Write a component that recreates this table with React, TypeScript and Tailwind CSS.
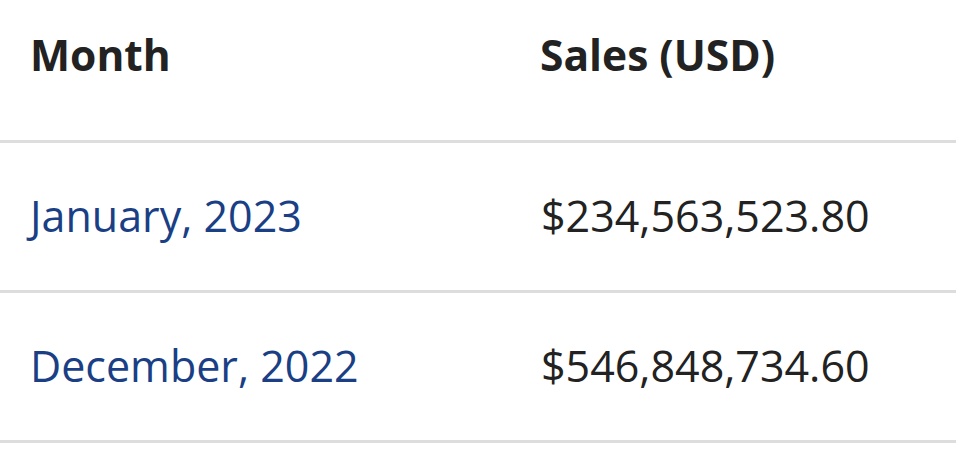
const rows = [
  { month: "January, 2023", sales: "$234,563,523.80" },
  { month: "December, 2022", sales: "$546,848,734.60" },
];

export default function App() {
  return (
    <div className="w-[956px] h-[459px] overflow-hidden bg-white font-['Open_Sans',sans-serif]">
      <div className="grid grid-cols-[510px_1fr] h-[143px] items-center border-b-[3px] border-[#dddddd] pl-[30px] text-[#222222]">
        <div className="text-[42.5px] font-bold pb-[30px]">Month</div>
        <div className="text-[42.5px] font-bold pb-[30px]">Sales (USD)</div>
      </div>
      {rows.map((r) => (
        <div
          key={r.month}
          className="grid grid-cols-[509px_1fr] h-[150px] items-center border-b-[3px] border-[#dddddd] pl-8"
        >
          <a href="#" className="text-[43px] text-[#1a3f85] -ml-[2px]">
            {r.month}
          </a>
          <div className="text-[43px] text-[#222222]">{r.sales}</div>
        </div>
      ))}
    </div>
  );
}
